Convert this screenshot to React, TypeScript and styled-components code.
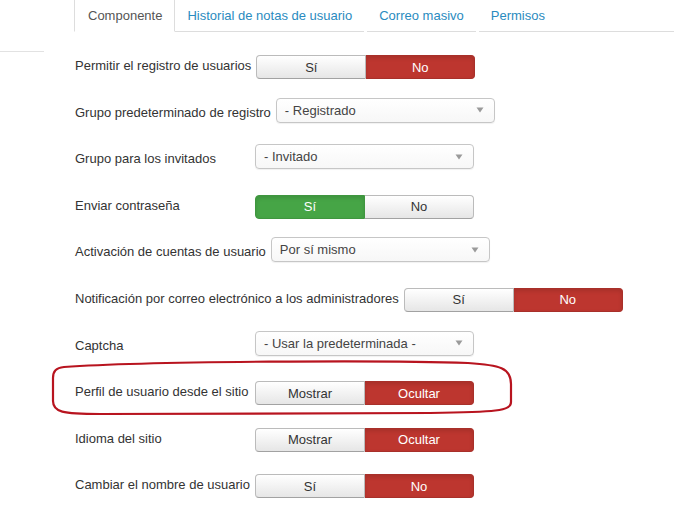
import React from 'react';
import styled, { createGlobalStyle, css } from 'styled-components';

const GlobalStyle = createGlobalStyle`
    html, body {
        margin: 0;
        padding: 0;
        background: #fff;
    }
    body {
        font-family: 'Liberation Sans', Arial, sans-serif;
        font-size: 13px;
        color: #333;
    }
`;

const Page = styled.div`
    position: relative;
    width: 674px;
    height: 510px;
    overflow: hidden;
`;

const TabBar = styled.ul`
    display: flex;
    margin: 0;
    padding: 0 0 0 74px;
    list-style: none;
    height: 32px;
`;

const Tab = styled.li<{ active?: boolean }>`
    padding: 0 12px;
    margin-right: 3px;
    line-height: 31px;
    white-space: nowrap;
    color: #2a8bc0;
    border-bottom: 1px solid #ddd;

    ${({ active }) =>
        active &&
        css`
            color: #555;
            border-left: 1px solid #ddd;
            border-right: 1px solid #ddd;
            border-bottom-color: transparent;
            margin-right: 0;
            padding: 0 12px 0 13px;
        `}
`;

const TabFill = styled.li`
    flex: 1;
    border-bottom: 1px solid #ddd;
    margin-left: -3px;
`;

const SideRule = styled.div`
    width: 44px;
    height: 1px;
    background: #e2e2e2;
    margin-top: 19px;
`;

const Form = styled.div`
    display: flex;
    flex-direction: column;
    gap: 22.6px;
    padding: 3px 0 0 75px;
`;

const Row = styled.div`
    display: flex;
    align-items: center;
    height: 24px;
`;

const Label = styled.div`
    min-width: 175px;
    margin-right: 5px;
    margin-top: -3px;
    white-space: nowrap;
    color: #333;
`;

const Group = styled.div`
    display: flex;
    width: 219px;
    height: 24px;
`;

const toneColors = {
    danger: '#bd362f',
    success: '#46a546',
};

const Toggle = styled.div<{ tone?: 'danger' | 'success' }>`
    flex: 1;
    display: flex;
    align-items: center;
    justify-content: center;
    border: 1px solid #bbb;
    border-bottom-color: #a2a2a2;
    background: linear-gradient(#ffffff, #e6e6e6);
    color: #333;
    font-size: 13px;

    &:first-child {
        border-radius: 4px 0 0 4px;
    }
    &:last-child {
        border-radius: 0 4px 4px 0;
        border-left: none;
    }

    ${({ tone }) =>
        tone &&
        css`
            background: ${toneColors[tone]};
            border-color: ${tone === 'danger' ? '#a8302a' : '#3f963f'};
            color: #fff;
            box-shadow: inset 0 2px 4px rgba(0, 0, 0, 0.12);
        `}
`;

const Select = styled.div`
    align-self: flex-start;
    margin-top: -4px;
    display: flex;
    align-items: center;
    justify-content: space-between;
    box-sizing: border-box;
    width: 219px;
    height: 25px;
    padding: 0 10px 0 8px;
    border: 1px solid #c6c6c6;
    border-radius: 4px;
    background: linear-gradient(#fff, #f7f7f7);
    color: #444;
    box-shadow: 0 1px 1px rgba(0, 0, 0, 0.06);
    white-space: nowrap;
`;

const Caret = () => (
    <svg width="8" height="6" viewBox="0 0 8 6">
        <path d="M0.5 0.5 L7.5 0.5 L4 5.5 Z" fill="#9a9a9a" />
    </svg>
);

const Marker = styled.svg`
    position: absolute;
    top: 0;
    left: 0;
    pointer-events: none;
`;

type Option = { text: string; tone?: 'danger' | 'success' };

type Field =
    | { label: string; kind: 'toggle'; options: Option[] }
    | { label: string; kind: 'select'; value: string };

const fields: Field[] = [
    {
        label: 'Permitir el registro de usuarios',
        kind: 'toggle',
        options: [{ text: 'Sí' }, { text: 'No', tone: 'danger' }],
    },
    { label: 'Grupo predeterminado de registro', kind: 'select', value: '- Registrado' },
    { label: 'Grupo para los invitados', kind: 'select', value: '- Invitado' },
    {
        label: 'Enviar contraseña',
        kind: 'toggle',
        options: [{ text: 'Sí', tone: 'success' }, { text: 'No' }],
    },
    { label: 'Activación de cuentas de usuario', kind: 'select', value: 'Por sí mismo' },
    {
        label: 'Notificación por correo electrónico a los administradores',
        kind: 'toggle',
        options: [{ text: 'Sí' }, { text: 'No', tone: 'danger' }],
    },
    { label: 'Captcha', kind: 'select', value: '- Usar la predeterminada -' },
    {
        label: 'Perfil de usuario desde el sitio',
        kind: 'toggle',
        options: [{ text: 'Mostrar' }, { text: 'Ocultar', tone: 'danger' }],
    },
    {
        label: 'Idioma del sitio',
        kind: 'toggle',
        options: [{ text: 'Mostrar' }, { text: 'Ocultar', tone: 'danger' }],
    },
    {
        label: 'Cambiar el nombre de usuario',
        kind: 'toggle',
        options: [{ text: 'Sí' }, { text: 'No', tone: 'danger' }],
    },
];

export default function App() {
    return (
        <Page>
            <GlobalStyle />
            <TabBar>
                <Tab active>Componente</Tab>
                <Tab>Historial de notas de usuario</Tab>
                <Tab>Correo masivo</Tab>
                <Tab>Permisos</Tab>
                <TabFill />
            </TabBar>
            <SideRule />
            <Form>
                {fields.map((f) => (
                    <Row key={f.label}>
                        <Label>{f.label}</Label>
                        {f.kind === 'toggle' ? (
                            <Group>
                                {f.options.map((o) => (
                                    <Toggle key={o.text} tone={o.tone}>
                                        {o.text}
                                    </Toggle>
                                ))}
                            </Group>
                        ) : (
                            <Select>
                                <span>{f.value}</span>
                                <Caret />
                            </Select>
                        )}
                    </Row>
                ))}
            </Form>
            <Marker width="674" height="510" viewBox="0 0 674 510">
                <path
                    d="M64 367 C150 361 390 360 468 363 C500 365 511 368 511 384 L511 402 C511 411 496 412 430 413 L100 414 C62 414 53 412 53 401 L53 378 C53 371 56 368 64 367 Z"
                    fill="none"
                    stroke="#b8141f"
                    strokeWidth="2.2"
                />
            </Marker>
        </Page>
    );
}
